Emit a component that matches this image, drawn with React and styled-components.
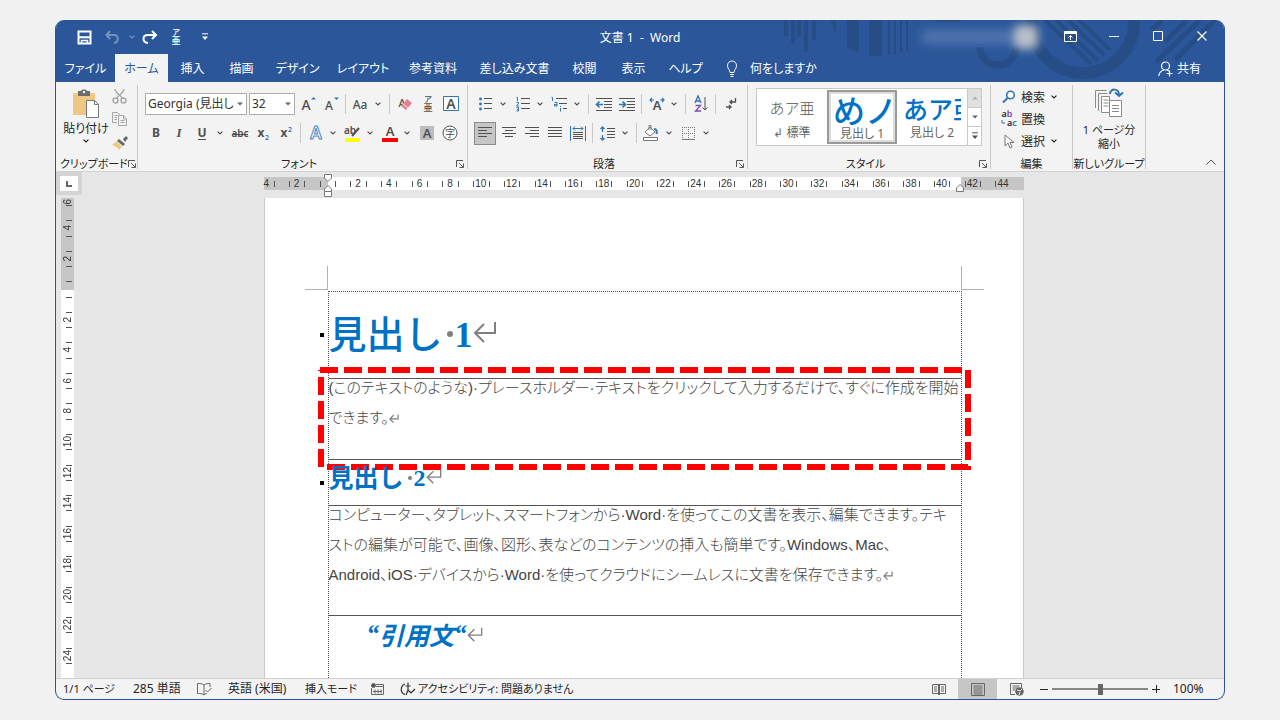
import React from "react";
import styled, { createGlobalStyle, css } from "styled-components";

const ui = `"Noto Sans", "Noto Sans CJK JP", sans-serif`;
const blue = "#2b579a";
const accent = "#0072c6";
const line = "#c8c8c8";

const GlobalStyle = createGlobalStyle`
  * { box-sizing: border-box; }
  body { margin: 0; background: #f1f1f1; }
  button, select, input { font: inherit; color: inherit; }
  button { border: 0; background: none; padding: 0; margin: 0; }
  h1, h2, p, blockquote { margin: 0; }
  svg { flex: none; overflow: visible; }
`;

const Desktop = styled.div`
  min-height: 100vh;
  padding: 20px 55px;
  display: flex;
  font-family: ${ui};
  font-feature-settings: "palt";
  font-size: 12px;
  line-height: 16px;
  color: #262626;
`;

const Window = styled.main`
  flex: 1;
  min-width: 0;
  height: calc(100vh - 40px);
  display: flex;
  flex-direction: column;
  border: 1px solid ${blue};
  border-top: 0;
  border-radius: 9px;
  overflow: hidden;
  background: #f3f3f3;
`;

/* ---------- header ---------- */
const Header = styled.header`
  position: relative;
  background: ${blue};
  color: #fff;
  flex: none;
`;
const Pattern = styled.svg`
  position: absolute;
  top: 0;
  right: 0;
  overflow: hidden;
`;
const TitleBar = styled.div`
  position: relative;
  height: 34px;
  display: grid;
  grid-template-columns: 1fr auto 1fr;
  align-items: center;
`;
const QuickAccess = styled.div`
  display: flex;
  align-items: center;
  padding-left: 16px;
`;
const QuickButton = styled.button`
  width: ${(p) => p.$w || 24}px;
  height: 24px;
  display: flex;
  align-items: center;
  justify-content: center;
  opacity: ${(p) => (p.disabled ? 0.35 : 1)};
`;
const DocTitle = styled.div`
  white-space: pre;
  padding-top: 2px;
`;
const WindowArea = styled.div`
  display: flex;
  justify-content: flex-end;
  align-items: center;
`;
const Account = styled.div`
  display: flex;
  align-items: center;
  margin-right: 10px;
  filter: blur(5px);
`;
const AccountName = styled.span`
  width: 92px;
  height: 14px;
  background: #4f74ae;
`;
const Avatar = styled.span`
  width: 24px;
  height: 24px;
  border-radius: 6px;
  background: #b9bfc8;
`;
const WindowButton = styled.button`
  width: 44px;
  height: 32px;
  display: flex;
  align-items: center;
  justify-content: center;
  padding-bottom: 2px;
`;
const TabRow = styled.nav`
  position: relative;
  height: 28px;
  display: flex;
  align-items: stretch;
`;
const Tab = styled.button`
  width: ${(p) => p.$w}px;
  padding-top: 2px;
  white-space: nowrap;
  ${(p) => p.$active && css`
    background: #f3f3f3;
    color: ${blue};
  `}
`;
const TellMe = styled.button`
  display: flex;
  align-items: center;
  gap: 12px;
  padding: 2px 0 0 13px;
`;
const Share = styled.button`
  display: flex;
  align-items: center;
  gap: 4px;
  margin-left: auto;
  padding: 2px 23px 0 0;
`;

/* ---------- ribbon ---------- */
const Ribbon = styled.section`
  height: 90px;
  flex: none;
  display: flex;
  padding-top: 3px;
  border-bottom: 1px solid #d2d2d2;
  color: #505050;
`;
const Group = styled.div`
  width: ${(p) => p.$w}px;
  flex: none;
  height: 84px;
  display: flex;
  flex-direction: column;
  border-right: 1px solid ${line};
`;
const GroupBody = styled.div`
  height: 68px;
  flex: none;
  padding: ${(p) => p.$pad || "0"};
  display: flex;
  flex-direction: ${(p) => (p.$column ? "column" : "row")};
`;
const GroupFooter = styled.div`
  height: 16px;
  flex: none;
  display: flex;
  align-items: center;
  padding: ${(p) => (p.$launcher ? "6px 3px 0 4px" : "6px 0 0")};
  font-size: 11px;
  color: #262626;
  white-space: nowrap;
`;
const GroupName = styled.span`
  flex: 1;
  text-align: center;
`;
const RibbonRow = styled.div`
  display: flex;
  align-items: center;
  height: 24px;
  margin-top: ${(p) => p.$top || 0}px;
`;
const Tool = styled.button`
  width: 23px;
  height: 23px;
  flex: none;
  display: flex;
  align-items: center;
  justify-content: center;
  ${(p) => p.$active && css`
    background: #c6c6c6;
    border: 1px solid #8a8a8a;
    width: 22px;
    margin-right: 1px;
  `}
`;
const DropArrow = styled.button`
  width: 14px;
  height: 22px;
  flex: none;
  display: flex;
  align-items: center;
  padding-left: 3px;
`;
const Divider = styled.span`
  width: 7px;
  height: 20px;
  flex: none;
  background: linear-gradient(${line}, ${line}) center / 1px 100% no-repeat;
`;
const Combo = styled.div`
  position: relative;
  width: ${(p) => p.$w}px;
  height: 22px;
  flex: none;
  margin-right: ${(p) => p.$gap}px;
  select {
    appearance: none;
    width: 100%;
    height: 100%;
    border: 1px solid #ababab;
    border-radius: 0;
    background: #fff;
    color: #333;
    padding: 0 12px 0 2px;
    font-size: 12px;
  }
  svg {
    position: absolute;
    right: 4px;
    top: 9px;
    pointer-events: none;
  }
`;
const PasteButton = styled.button`
  width: 52px;
  height: 64px;
  margin-left: 4px;
  padding-top: 4px;
  display: flex;
  flex-direction: column;
  align-items: center;
  gap: 2px;
  color: #262626;
  white-space: nowrap;
`;
const ClipColumn = styled.div`
  display: flex;
  flex-direction: column;
  margin-left: -4px;
`;
const Gallery = styled.div`
  display: flex;
  height: 58px;
  border: 1px solid ${line};
  background: #fff;
  flex: 1;
`;
const StyleItem = styled.button`
  width: 70px;
  padding: 2px 6px;
  display: flex;
  flex-direction: column;
  white-space: nowrap;
  ${(p) => p.$active && css`
    border: 2px solid #9a9a9a;
    box-shadow: inset 0 0 0 2px #dcdcdc;
    margin: 1px 0;
    padding: 0 4px;
  `}
`;
const Preview = styled.span`
  display: block;
  height: 34px;
  flex: none;
  width: 100%;
  overflow: hidden;
  font-feature-settings: normal;
  font-family: "Noto Sans CJK JP", sans-serif;
  font-size: ${(p) => p.$size}px;
  line-height: 34px;
  color: ${(p) => (p.$size > 16 ? accent : "#555")};
  text-align: ${(p) => (p.$size > 16 ? "left" : "center")};
  font-weight: ${(p) => (p.$size > 16 ? 500 : 300)};
`;
const StyleName = styled.span`
  width: 100%;
  text-align: center;
  color: #666;
`;
const Scroller = styled.div`
  width: 14px;
  display: flex;
  flex-direction: column;
`;
const ScrollButton = styled.button`
  flex: 1;
  display: flex;
  align-items: center;
  justify-content: center;
  border-left: 1px solid ${line};
  border-bottom: 1px solid ${line};
  background: ${(p) => (p.disabled ? "#e0e0e0" : "#fff")};
  svg { opacity: ${(p) => (p.disabled ? 0.4 : 1)}; }
  &:last-child { border-bottom: 0; }
`;
const EditButton = styled.button`
  height: 22px;
  display: flex;
  align-items: center;
  gap: 4px;
  color: #262626;
  white-space: nowrap;
`;
const EditIcon = styled.span`
  width: 16px;
  display: flex;
  justify-content: center;
`;
const EditLabel = styled.span`
  padding-top: 2px;
  margin-right: 2px;
`;
const NewGroupButton = styled.button`
  flex: 1;
  display: flex;
  flex-direction: column;
  align-items: center;
  line-height: 14px;
  font-size: 11px;
  color: #262626;
  padding-top: 3px;
`;
const NewGroupIcon = styled.span`
  height: 35px;
`;
const Collapse = styled.button`
  margin: auto 8px 2px auto;
`;

/* ---------- workspace ---------- */
const Workspace = styled.section`
  flex: 1;
  min-height: 0;
  display: flex;
  background: #e6e6e6;
  overflow: hidden;
`;
const RulerColumn = styled.div`
  width: 26px;
  flex: none;
  display: flex;
  flex-direction: column;
`;
const TabSelector = styled.button`
  height: 23px;
  flex: none;
  margin-bottom: 3px;
  border: 4px solid #d4d4d4;
  background: #fff;
  color: #666;
  display: flex;
  align-items: center;
  justify-content: center;
`;
const VRuler = styled.div`
  flex: 1;
  min-height: 0;
  width: 13px;
  margin-left: 5px;
  display: flex;
  flex-direction: column;
  overflow: hidden;
  background: linear-gradient(#c6c6c6 92px, #fff 92px);
`;
const VCell = styled.span`
  flex: ${(p) => (p.$size ? `none; height: ${p.$size}px` : 1)};
  min-height: 0;
  display: flex;
  align-items: ${(p) => (p.$size ? "flex-end" : "center")};
  justify-content: center;
  font: 10px/10px "Liberation Sans", sans-serif;
  color: #333;
  background: linear-gradient(#555, #555) right 2px top / 6px ${(p) => (p.$size ? 0 : 1)}px no-repeat;
  span { writing-mode: vertical-rl; transform: rotate(180deg); }
`;
const Canvas = styled.div`
  flex: 1;
  min-width: 0;
  padding-right: 19px;
  display: flex;
  flex-direction: column;
  align-items: center;
  overflow: hidden;
`;
const HRuler = styled.div`
  position: relative;
  width: 760px;
  height: 13px;
  flex: none;
  margin: 5px 0 8px;
  padding-right: 13px;
  display: flex;
  background: linear-gradient(90deg, #c6c6c6 64px, #fff 64px, #fff 697px, #c6c6c6 697px);
`;
const HCell = styled.span`
  flex: ${(p) => (p.$size ? `none; width: ${p.$size}px` : 1)};
  min-width: 0;
  display: flex;
  align-items: center;
  justify-content: ${(p) => (p.$size ? "flex-start" : "center")};
  font: 10px/12px "Liberation Sans", sans-serif;
  color: #333;
  background: linear-gradient(#555, #555) left center / ${(p) => (p.$size ? 0 : 1)}px 6px no-repeat;
`;
const Marker = styled.svg`
  position: absolute;
  top: ${(p) => p.$y}px;
  left: ${(p) => p.$x}px;
`;
const Paper = styled.article`
  width: 760px;
  flex: 1;
  min-height: 0;
  background: #fff;
  border: solid #c9c9c9;
  border-width: 0 1px;
  padding-top: 68px;
  overflow: hidden;
  display: flex;
  flex-direction: column;
`;
const CropRow = styled.div`
  display: flex;
  justify-content: space-between;
  padding: 0 39px 0 40px;
  flex: none;
  margin-bottom: 1px;
`;
const Crop = styled.span`
  width: 23px;
  height: 24px;
  border: 0 solid #b0b0b0;
  border-bottom-width: 1px;
  ${(p) => (p.$right ? "border-left-width: 1px;" : "border-right-width: 1px;")}
`;
const Frame = styled.div`
  flex: 1;
  margin: 0 61px 0 63px;
  border: 1px dotted #555;
  border-bottom: 0;
`;
const Cell = styled.section`
  position: relative;
  display: flow-root;
  height: ${(p) => p.$h}px;
  border-bottom: ${(p) => (p.$last ? 0 : 1)}px solid #555;
  white-space: nowrap;
`;
const Bullet = styled.span`
  position: absolute;
  left: -9px;
  top: ${(p) => p.$y}px;
  width: 4px;
  height: 4px;
  background: #000;
`;
const headingText = css`
  display: flex;
  align-items: center;
  color: ${accent};
  font-family: "Noto Sans CJK JP", sans-serif;
  font-feature-settings: normal;
`;
const HeadingOne = styled.h1`
  ${headingText}
  font-size: 38px;
  font-weight: 500;
  line-height: 74px;
`;
const HeadingTwo = styled.h2`
  ${headingText}
  font-size: 25px;
  font-weight: 700;
  line-height: 28px;
`;
const Numeral = styled.span`
  font-family: "Liberation Serif", serif;
  font-weight: 700;
  font-size: ${(p) => p.$size}px;
  padding-top: ${(p) => p.$drop}px;
`;
const SpaceDot = styled.span`
  width: ${(p) => p.$r}px;
  height: ${(p) => p.$r}px;
  margin: 4px 2px 0 4px;
  border-radius: 50%;
  background: #808080;
`;
const BodyText = styled.p`
  font-family: "Liberation Sans", "Noto Sans CJK JP", sans-serif;
  font-weight: 300;
  font-size: 15px;
  line-height: 30px;
  color: #444;
  margin-top: -6px;
`;
const TextLine = styled.span`
  display: block;
`;
const Quote = styled.blockquote`
  ${headingText}
  padding-left: 38px;
  font-size: 25px;
  font-weight: 700;
  font-style: italic;
  line-height: 36px;
`;
const QuoteMark = styled.span`
  font-family: "Liberation Serif", serif;
`;
const Highlight = styled.svg`
  position: absolute;
  left: -11px;
  top: -12px;
  pointer-events: none;
`;

/* ---------- status bar ---------- */
const StatusBar = styled.footer`
  height: 21px;
  flex: none;
  display: flex;
  align-items: center;
  border-top: 1px solid #d0d0d0;
  white-space: nowrap;
`;
const StatusItem = styled.button`
  width: ${(p) => p.$w}px;
  height: 20px;
  flex: none;
  display: flex;
  align-items: center;
  gap: 2px;
  padding-left: 7px;
  font-size: ${(p) => (p.$small ? 11 : 12)}px;
`;
const ViewButton = styled.button`
  width: 39px;
  height: 20px;
  display: flex;
  align-items: center;
  justify-content: center;
  color: #666;
  background: ${(p) => (p.$active ? "#c6c6c6" : "none")};
`;
const Spacer = styled.span`
  flex: 1;
`;
const ZoomStep = styled.button`
  width: 16px;
  display: flex;
  justify-content: center;
`;
const ZoomSlider = styled.input`
  appearance: none;
  width: 96px;
  height: 14px;
  margin: 0;
  background: linear-gradient(#888, #888) center / 100% 2px no-repeat;
  &::-webkit-slider-thumb {
    appearance: none;
    width: 5px;
    height: 11px;
    background: #666;
  }
`;
const ZoomValue = styled.button`
  width: 60px;
  text-align: left;
  padding-left: 9px;
`;

/* ---------- icons ---------- */
const Svg = ({ w = 16, h = 16, children, ...rest }) => (
  <svg width={w} height={h} viewBox={`0 0 ${w} ${h}`} fill="none" stroke="currentColor" aria-hidden="true" {...rest}>
    {children}
  </svg>
);
const Chevron = () => (
  <Svg w={6} h={4} strokeWidth="1.2"><path d="M.6.6 3 3 5.4.6" /></Svg>
);
const Triangle = ({ up }) => (
  <Svg w={6} h={4} stroke="none" fill="#666"><path d={up ? "M0 3.5h6L3 .5z" : "M0 .5h6L3 3.5z"} /></Svg>
);
const Launcher = () => (
  <Svg w={8} h={8} stroke="#555"><path d="M.5 7V.5H7M3 3l4 4M7.5 3.5v4h-4" /></Svg>
);
const ReturnMark = ({ w, h }) => (
  <svg width={w} height={h} viewBox="0 0 24 22" fill="none" stroke="#7f7f7f" strokeWidth={w > 12 ? 2 : 3} aria-hidden="true">
    <path d="M22 1v11H2M11 3 2 12l9 9" />
  </svg>
);
const Glyph = ({ x, y, size, fill = "currentColor", family = "Noto Sans", weight = 600, children, ...r }) => (
  <text x={x} y={y} fontSize={size} fill={fill} stroke="none" fontFamily={`${family}, 'Noto Sans CJK JP'`} fontWeight={weight} textAnchor="middle" {...r}>{children}</text>
);
const Ruby = () => (
  <Svg w={12} h={18}><Glyph x={6} y={7} size={8} weight={500}>ア</Glyph><Glyph x={6} y={16} size={9} weight={500}>亜</Glyph></Svg>
);
const rows = (list) => list.map(([x1, x2, y], i) => <path key={i} d={`M${x1} ${y}.5H${x2}`} />);

const icons = {
  save: <Svg w={15} h={15} strokeWidth="2"><path d="M1.5 1.5h12v12h-12z" /><path d="M1 7.2h13" /><path d="M4.5 14v-3.500h6V14" strokeWidth="1.5" /></Svg>,
  undo: <Svg w={15} h={14} strokeWidth="2"><path d="M5 1 1.5 5 5 9M2 5h7c5 0 5 7 0 8" /></Svg>,
  redo: <Svg w={15} h={14} strokeWidth="2"><path d="m10 1 4 4-4 4M13 5H6C0 5 0 12 6 13" /></Svg>,
  more: <Svg w={6} h={8}><path d="M0 .8h6" /><path d="M0 3.5h6L3 7z" fill="currentColor" stroke="none" /></Svg>,
  bulb: <Svg w={12} h={18}><path d="M4 12.500c0-2.500-2.500-3.500-2.500-7a4.500 4.500 0 0 1 9 0c0 3.500-2.500 4.500-2.500 7zM4 14.500h4M4.500 16.500h3" /></Svg>,
  share: <Svg w={15} h={16} strokeWidth="1.2"><circle cx="7.500" cy="5" r="4" /><path d="M.8 15c.3-3 2-5 5-6M9 9l2 1M11.500 9.500v6M8.500 12.500h6" /></Svg>,
  ribbonOpts: <Svg w={13} h={11}><path d="M.5.5h12v10H.5z" /><path d="M1 2h11" strokeWidth="2" /><path d="M6.500 9V5M4.500 6.500l2-2 2 2" /></Svg>,
  min: <Svg w={10} h={10}><path d="M0 5.500h10" /></Svg>,
  max: <Svg w={10} h={10}><path d="M.5.5h9v9h-9z" /></Svg>,
  close: <Svg w={10} h={10} strokeWidth="1.2"><path d="m.5.5 9 9M9.500.5l-9 9" /></Svg>,
  paste: <Svg w={28} h={30}><path d="M1 4h22v22H1z" fill="#ecc883" stroke="none" /><path d="M6 2h3c0-2 6-2 6 0h3v5H6z" fill="#6d6d6d" stroke="none" /><circle cx="12" cy="3" r="1.200" fill="#fff" stroke="none" /><path d="M14.500 11.500h8l4 4v13h-12z" fill="#fff" stroke="#777" /><path d="M22.500 11.500v4h4" stroke="#777" /></Svg>,
  cut: <Svg w={15} h={15} stroke="#a6a6a6" strokeWidth="1.400"><path d="M3 0c0 4 6 6 7 9M12 0c0 4-6 6-7 9" /><circle cx="3.500" cy="11.500" r="2.500" /><circle cx="11.500" cy="11.500" r="2.500" /></Svg>,
  copy: <Svg w={15} h={15} stroke="#a6a6a6"><path d="M5 10.500H.5v-10h5l2 2V4M2.500 3.500h3M2.500 5.500H5M2.500 7.500H5" /><path d="M6.500 3.500h5l3 3v7h-8zM11.500 4v3h3M8.500 8.500h4M8.500 10.500h4" /></Svg>,
  brush: <Svg w={16} h={14} stroke="none"><path d="M11 3 14 0l2 2-3 4z" fill="#666" /><path d="m7 3 6 5-2 2-6-5z" fill="#666" /><path d="m4.500 5.500 5.500 5L7 14C5 11 3 10 0 9z" fill="#ecc883" /></Svg>,
  grow: <Svg w={16} h={16}><Glyph x={6} y={14} size={14} weight={500}>A</Glyph><path d="M11 3.500h5L13.500 1z" fill="#2f75b5" stroke="none" /></Svg>,
  shrink: <Svg w={16} h={16}><Glyph x={6} y={14} size={12} weight={500}>A</Glyph><path d="M11 1.500h5L13.500 4z" fill="#2f75b5" stroke="none" /></Svg>,
  caseIcon: <Svg w={18} h={16}><Glyph x={8} y={13} size={12} weight={500}>Aa</Glyph></Svg>,
  clear: <Svg w={16} h={16}><Glyph x={5} y={11} size={11} weight={500}>A</Glyph><path d="m10 3 5 4-6 7-5-4z" fill="#e57f92" stroke="none" /><path d="m6 8 5 4" stroke="#f3f3f3" /></Svg>,
  boxA: <Svg w={16} h={16}><path d="M.5.5h15v14H.5z" stroke="#2f75b5" fill="#fff" /><Glyph x={8} y={13} size={14}>A</Glyph></Svg>,
  bold: <Svg><Glyph x={7} y={12} size={12} weight={700}>B</Glyph></Svg>,
  italic: <Svg><Glyph x={7} y={12} size={13} family="Liberation Serif" weight={700} fontStyle="italic">I</Glyph></Svg>,
  under: <Svg><Glyph x={7} y={12} size={12} weight={700}>U</Glyph><path d="M3 14.500h8" /></Svg>,
  strike: <Svg w={18}><Glyph x={9} y={12} size={10}>abc</Glyph><path d="M1 9.500h16" /></Svg>,
  sub: <Svg><Glyph x={6} y={12} size={12} weight={700}>x</Glyph><Glyph x={12} y={15} size={7} fill="#2f75b5">2</Glyph></Svg>,
  sup: <Svg><Glyph x={6} y={12} size={12} weight={700}>x</Glyph><Glyph x={12} y={7} size={7} fill="#2f75b5">2</Glyph></Svg>,
  effect: <Svg><text x="8" y="14" fontSize="17" fontFamily="Noto Sans" fontWeight="600" fill="#fff" stroke="#4a86c5" textAnchor="middle">A</text></Svg>,
  hilite: <Svg w={17} h={17}><Glyph x={6} y={9} size={10}>ab</Glyph><path d="M15 3 8 11" strokeWidth="2" /><path d="M1 13h15v4H1z" fill="#ff0" stroke="none" /></Svg>,
  colorA: <Svg w={16} h={17}><Glyph x={8} y={11} size={13}>A</Glyph><path d="M0 13h16v4H0z" fill="#f00" stroke="none" /></Svg>,
  shadeA: <Svg w={14} h={14}><path d="M0 0h14v14H0z" fill="#bdbdbd" stroke="none" /><Glyph x={7} y={12} size={13}>A</Glyph></Svg>,
  circleChar: <Svg><circle cx="8" cy="8" r="7" fill="#fff" /><Glyph x={8} y={11.5} size={10} weight={400}>字</Glyph></Svg>,
  bullets: <Svg w={14} h={14}>{rows([[5, 13, 1], [5, 13, 6], [5, 13, 11]])}<g fill="#2f75b5" stroke="none"><circle cx="1.500" cy="2" r="1.400" /><circle cx="1.500" cy="7" r="1.400" /><circle cx="1.500" cy="12" r="1.400" /></g></Svg>,
  numbers: <Svg w={14} h={16}>{rows([[5, 14, 2], [5, 14, 7], [5, 14, 12]])}<g stroke="#2f75b5"><path d="M.5 1.500h1V5M.5 6.500h2v1.500l-2 1.500v.5h2.500M.5 11.500h2v3.500h-2M1 13.500h1.500" /></g></Svg>,
  multi: <Svg w={17} h={16}>{rows([[5, 16, 2], [8, 16, 7], [12, 16, 12]])}<g stroke="#2f75b5"><path d="M.5 1.500h1V5M3.500 6.500h2.500V10H3.500V8.500H6M9.500 12v3.500M9.500 10v1" /></g></Svg>,
  outdent: <Svg w={16} h={13}>{rows([[0, 16, 0], [8, 16, 3], [8, 16, 6], [8, 16, 9], [0, 16, 12]])}<path d="M7 6.500H1M3.500 3.500l-3 3 3 3" stroke="#2f75b5" strokeWidth="1.600" /></Svg>,
  indent: <Svg w={16} h={13}>{rows([[0, 16, 0], [8, 16, 3], [8, 16, 6], [8, 16, 9], [0, 16, 12]])}<path d="M0 6.500h6M3.500 3.500l3 3-3 3" stroke="#2f75b5" strokeWidth="1.600" /></Svg>,
  spread: <Svg w={16} h={14}><Glyph x={8} y={13} size={13}>A</Glyph><path d="M5 3H1M3 1 1 3l2 2M11 3h4M13 1l2 2-2 2" stroke="#2f75b5" strokeWidth="1.200" /></Svg>,
  sort: <Svg w={14} h={16}><path d="m1 7 3-7 3 7M2 5h4" stroke="#2f75b5" strokeWidth="1.300" /><path d="M1.500 9.500h5L1.500 15h5.500" stroke="#8648ad" strokeWidth="1.300" /><path d="M11 1v13M8.500 11.500 11 14l2.500-2.500" /></Svg>,
  marks: <Svg w={12} h={14}><path d="M10.500 1v4H5M7 3 5 5l2 2M1 10h5M4 8l2 2-2 2" strokeWidth="1.300" /></Svg>,
  left: <Svg w={14} h={12}>{rows([[0, 14, 0], [0, 9, 3], [0, 14, 6], [0, 9, 9]])}</Svg>,
  center: <Svg w={14} h={12}>{rows([[0, 14, 0], [3, 11, 3], [0, 14, 6], [3, 11, 9]])}</Svg>,
  right: <Svg w={14} h={12}>{rows([[0, 14, 0], [5, 14, 3], [0, 14, 6], [5, 14, 9]])}</Svg>,
  justify: <Svg w={14} h={12}>{rows([[0, 14, 0], [0, 14, 3], [0, 14, 6], [0, 14, 9]])}</Svg>,
  distribute: <Svg w={16} h={15}><path d="M.5 0v15M15.500 0v15M3 2.500h10M5 .5l-2 2 2 2M11 .5l2 2-2 2" stroke="#2f75b5" />{rows([[3, 13, 6], [3, 13, 8], [3, 13, 10], [3, 13, 12]])}</Svg>,
  spacing: <Svg w={15} h={15}>{rows([[7, 15, 2], [7, 15, 5], [7, 15, 8], [7, 15, 11]])}<path d="M2.500 1v5M.5 3l2-2 2 2M2.500 9v5M.5 12l2 2 2-2" stroke="#2f75b5" strokeWidth="1.300" /></Svg>,
  bucket: <Svg w={17} h={16} stroke="#777"><path d="m7 2 5 5-5 4-5-4zM6 5V.5h2V5" fill="#fff" /><path d="M11 4c3 0 3 3 2.500 5" stroke="#2f75b5" strokeWidth="2" /><path d="M.5 12.500h14v3H.5z" fill="#fff" /></Svg>,
  borders: <Svg w={13} h={13} stroke="#777"><path d="M.5 0v12M6.500 0v12M12.500 0v12M0 .5h13M0 6.500h13" strokeDasharray="1 1" /><path d="M0 12.500h13" /></Svg>,
  find: <Svg w={14} h={14} stroke="#2f75b5" strokeWidth="1.600"><circle cx="8.500" cy="5" r="3.800" fill="#fff" /><path d="M5.500 8 1 12.500" strokeWidth="2" /></Svg>,
  replace: <Svg w={16} h={16}><Glyph x={6} y={6} size={9}>a<tspan fill="#8648ad">b</tspan></Glyph><Glyph x={11} y={15} size={9}>a<tspan fill="#2f75b5">c</tspan></Glyph><path d="M1 9v3h3" stroke="#2f75b5" /></Svg>,
  select: <Svg w={12} h={15} stroke="#777"><path d="M2 1v11l3-3 2 5 2-1-2-4.500h4z" fill="#fff" /></Svg>,
  onePage: <Svg w={30} h={30} stroke="#8a8a8a"><path d="M1.500 20V2.500h11M4.500 23V5.500h9" /><path d="M7.500 8.500h8v16h-8zM9.500 12h5M9.500 15h5M9.500 18h5" fill="#fff" /><path d="M15.500 12.500h12v16h-12z" fill="#fff" /><path d="M18 17.500h7M18 20.500h7M18 23.500h7" /><path d="M16 6c0-6 9-6 9 1M21 4.500l4 3.500 4-3.500" stroke="#2f75b5" strokeWidth="2" /></Svg>,
  collapse: <Svg w={10} h={6}><path d="m.5 5.500 4.500-4.500 4.500 4.500" /></Svg>,
  book: <Svg w={15} h={13} stroke="#666"><path d="M7 2C5 .5 3 .5.5.5v10c2.500 0 4.500 0 6.500 1.500zM7 2c1.500-1.500 4-1.500 6-1.500V4M7 12c1-1 2-1.300 3-1.500M8.500 7l2 2 4-4" /></Svg>,
  macro: <Svg w={13} h={12} stroke="#666"><path d="M5 1.500h7.500v10H.5V5" /><path d="M5 3.500h7.500M4 6.500v4M7 6.500v4M10 6.500v4M2 8.500h9" /><circle cx="2.500" cy="2.500" r="2" fill="#555" /></Svg>,
  access: <Svg w={16} h={15} stroke="#333" strokeWidth="1.200"><path d="M5 2C0 4 0 11 5 12.500M8 .5v8M5.500 4h5M8 8l-2 5M8 8l3 3 4-4" /></Svg>,
  read: <Svg w={14} h={12}><path d="M6.500 1.500h-6v9h6zM7.500 1.500h6v9h-6zM2 4h3M2 6h3M2 8h3M9 4h3M9 6h3M9 8h3" /><path d="M7 1v11" strokeWidth="2" /></Svg>,
  print: <Svg w={14} h={13}><path d="M.5.5h13v12H.5zM2.500 3h9M2.500 5h9M2.500 7h9M2.500 9h9M2.500 11h9" /></Svg>,
  web: <Svg w={14} h={13}><path d="M5 11.500H.5V.5h11V5M2.500 3h7M2.500 5h6M2.500 7h3" /><circle cx="9.500" cy="8.500" r="3.800" fill="#666" /><path d="m7 7 3 1 2-2M9 12l1-3" stroke="#f3f3f3" /></Svg>,
};

const Drop = ({ name }) => (
  <DropArrow aria-label={`${name} オプション`}><Chevron /></DropArrow>
);
const IconTool = ({ name, icon, drop, active }) => (
  <>
    <Tool aria-label={name} $active={active}>{icons[icon] || <Ruby />}</Tool>
    {drop && <Drop name={name} />}
  </>
);
const EditTool = ({ icon, label, drop }) => (
  <EditButton><EditIcon>{icons[icon]}</EditIcon><EditLabel>{label}</EditLabel>{drop && <Chevron />}</EditButton>
);
const RibbonGroup = ({ name, w, launcher, pad, column, children }) => (
  <Group $w={w}>
    <GroupBody $pad={pad} $column={column}>{children}</GroupBody>
    <GroupFooter $launcher={launcher}>
      <GroupName>{name}</GroupName>
      {launcher && <button aria-label={`${name} の詳細`}><Launcher /></button>}
    </GroupFooter>
  </Group>
);

const tabs = [
  ["ファイル", 59], ["ホーム", 53], ["挿入", 49], ["描画", 49], ["デザイン", 63], ["レイアウト", 68],
  ["参考資料", 72], ["差し込み文書", 91], ["校閲", 49], ["表示", 49], ["ヘルプ", 55],
];

const HeaderPattern = () => (
  <Pattern width="460" height="62" viewBox="765 20 460 62" fill="none" stroke="#264d86" aria-hidden="true">
    <g fill="#264d86" stroke="none">
      <path d="M785 20h4v16h-4zM792 20h4v23h-4zM798 20h4v17h-4zM805 20h4v32h-4zM813 20h4v20h-4z" />
      <path d="M831 20h6v13zM848 20h12v33l-12-6zM870 20h13v36h-13z" />
      <path d="M889 20h2v35h-2zM895 20h2v34h-2zM901 20h2v32h-2zM907 20h2v30h-2zM936 20h26v2h-26z" />
    </g>
    <path d="M981 47a18 18 0 0 0 36 0" strokeWidth="7" />
    <circle cx="1084" cy="22" r="51" strokeWidth="12" />
    <path d="m1046 20 46 44M1057 20l42 41M1069 20l36 35M1080 20l31 30" strokeWidth="4" />
    <path d="m1153 30 10-10M1166 42l22-22M1157 62l44-42M1176 60l40-40" strokeWidth="5" />
  </Pattern>
);

const range = (n) => Array.from({ length: n }, (_, i) => i);

export default function App() {
  return (
    <>
      <GlobalStyle />
      <Desktop>
        <Window>
          <Header>
            <HeaderPattern />
            <TitleBar>
              <QuickAccess>
                <QuickButton aria-label="上書き保存">{icons.save}</QuickButton>
                <QuickButton aria-label="元に戻す" disabled $w={32}>{icons.undo}</QuickButton>
                <QuickButton aria-label="元に戻すの一覧" disabled $w={8}><Chevron /></QuickButton>
                <QuickButton aria-label="やり直し" $w={26}>{icons.redo}</QuickButton>
                <QuickButton aria-label="ルビ" $w={28}><Ruby /></QuickButton>
                <QuickButton aria-label="クイック アクセスのカスタマイズ" $w={30}>{icons.more}</QuickButton>
              </QuickAccess>
              <DocTitle>文書 1  -  Word</DocTitle>
              <WindowArea>
                <Account><AccountName /><Avatar /></Account>
                <WindowButton aria-label="リボンの表示オプション">{icons.ribbonOpts}</WindowButton>
                <WindowButton aria-label="最小化">{icons.min}</WindowButton>
                <WindowButton aria-label="最大化">{icons.max}</WindowButton>
                <WindowButton aria-label="閉じる">{icons.close}</WindowButton>
              </WindowArea>
            </TitleBar>
            <TabRow>
              {tabs.map(([t, w]) => <Tab key={t} $w={w} $active={t === "ホーム"}>{t}</Tab>)}
              <TellMe>{icons.bulb}何をしますか</TellMe>
              <Share>{icons.share}共有</Share>
            </TabRow>
          </Header>

          <Ribbon>
            <RibbonGroup name="クリップボード" w={82} launcher>
              <PasteButton>{icons.paste}<span>貼り付け</span><Chevron /></PasteButton>
              <ClipColumn>
                <Tool aria-label="切り取り">{icons.cut}</Tool>
                <Tool aria-label="コピー">{icons.copy}</Tool>
                <Tool aria-label="書式のコピー">{icons.brush}</Tool>
              </ClipColumn>
            </RibbonGroup>

            <RibbonGroup name="フォント" w={330} launcher pad="7px 0 0 7px" column>
              <RibbonRow>
                <Combo $w={102} $gap={2}>
                  <select aria-label="フォント"><option>Georgia (見出しのフォント)</option></select>
                  <Triangle />
                </Combo>
                <Combo $w={46} $gap={1}>
                  <select aria-label="フォント サイズ"><option>32</option></select>
                  <Triangle />
                </Combo>
                <IconTool name="フォント サイズの拡大" icon="grow" />
                <IconTool name="フォント サイズの縮小" icon="shrink" />
                <Divider />
                <IconTool name="文字種の変換" icon="caseIcon" drop />
                <Divider />
                <IconTool name="書式のクリア" icon="clear" />
                <IconTool name="ルビ" />
                <IconTool name="囲み線" icon="boxA" />
              </RibbonRow>
              <RibbonRow $top={5}>
                <IconTool name="太字" icon="bold" />
                <IconTool name="斜体" icon="italic" />
                <IconTool name="下線" icon="under" drop />
                <IconTool name="取り消し線" icon="strike" />
                <IconTool name="下付き" icon="sub" />
                <IconTool name="上付き" icon="sup" />
                <Divider />
                <IconTool name="文字の効果" icon="effect" drop />
                <IconTool name="蛍光ペン" icon="hilite" drop />
                <IconTool name="フォントの色" icon="colorA" drop />
                <IconTool name="文字の網かけ" icon="shadeA" />
                <IconTool name="囲い文字" icon="circleChar" />
              </RibbonRow>
            </RibbonGroup>

            <RibbonGroup name="段落" w={280} launcher pad="7px 0 0 6px" column>
              <RibbonRow>
                <IconTool name="箇条書き" icon="bullets" drop />
                <IconTool name="段落番号" icon="numbers" drop />
                <IconTool name="アウトライン" icon="multi" drop />
                <Divider />
                <IconTool name="インデントを減らす" icon="outdent" />
                <IconTool name="インデントを増やす" icon="indent" />
                <Divider />
                <IconTool name="拡張書式" icon="spread" drop />
                <Divider />
                <IconTool name="並べ替え" icon="sort" />
                <Divider />
                <IconTool name="編集記号の表示" icon="marks" />
              </RibbonRow>
              <RibbonRow $top={5}>
                <IconTool name="左揃え" icon="left" active />
                <IconTool name="中央揃え" icon="center" />
                <IconTool name="右揃え" icon="right" />
                <IconTool name="両端揃え" icon="justify" />
                <IconTool name="均等割り付け" icon="distribute" />
                <Divider />
                <IconTool name="行間" icon="spacing" drop />
                <Divider />
                <IconTool name="塗りつぶし" icon="bucket" drop />
                <IconTool name="罫線" icon="borders" drop />
              </RibbonRow>
            </RibbonGroup>

            <RibbonGroup name="スタイル" w={243} launcher pad="3px 10px 0 8px">
              <Gallery>
                <StyleItem><Preview $size={15}>あア亜</Preview><StyleName>↲ 標準</StyleName></StyleItem>
                <StyleItem $active><Preview $size={32}>めノ</Preview><StyleName>見出し 1</StyleName></StyleItem>
                <StyleItem><Preview $size={25}>あア亜</Preview><StyleName>見出し 2</StyleName></StyleItem>
                <Scroller>
                  <ScrollButton aria-label="前の行" disabled><Triangle up /></ScrollButton>
                  <ScrollButton aria-label="次の行"><Triangle /></ScrollButton>
                  <ScrollButton aria-label="その他">{icons.more}</ScrollButton>
                </Scroller>
              </Gallery>
            </RibbonGroup>

            <RibbonGroup name="編集" w={82} pad="1px 0 0 10px" column>
              <EditTool icon="find" label="検索" drop />
              <EditTool icon="replace" label="置換" />
              <EditTool icon="select" label="選択" drop />
            </RibbonGroup>

            <RibbonGroup name="新しいグループ" w={73}>
              <NewGroupButton><NewGroupIcon>{icons.onePage}</NewGroupIcon><span>1 ページ分</span><span>縮小</span></NewGroupButton>
            </RibbonGroup>
            <Collapse aria-label="リボンを折りたたむ">{icons.collapse}</Collapse>
          </Ribbon>

          <Workspace>
            <RulerColumn>
              <TabSelector aria-label="タブの種類"><Svg w={6} h={6} strokeWidth="2"><path d="M1 0v5h5" /></Svg></TabSelector>
              <VRuler>
                <VCell $size={7}><span>6</span></VCell>
                {range(31).map((i) => {
                  const n = Math.abs(i - 5);
                  return <VCell key={i}>{n > 0 && n % 2 === 0 && <span>{n}</span>}</VCell>;
                })}
              </VRuler>
            </RulerColumn>
            <Canvas>
              <HRuler>
                <HCell $size={10}>4</HCell>
                {range(48).map((i) => {
                  const n = Math.abs(i - 3);
                  return <HCell key={i}>{n > 0 && n % 2 === 0 && n}</HCell>;
                })}
                <Marker $x={59} $y={-3} width="10" height="24" viewBox="0 0 10 24" fill="#fff" stroke="#777">
                  <path d="M1.500.5h7V4L5 7.500 1.500 4zM5 11.500 8.500 15v2.500h-7V15zM1.500 17.500h7v5h-7z" />
                </Marker>
                <Marker $x={691} $y={7} width="10" height="9" viewBox="0 0 10 9" fill="#fff" stroke="#777">
                  <path d="M5 .5 8.500 4v3.500h-7V4z" />
                </Marker>
              </HRuler>
              <Paper>
                <CropRow><Crop /><Crop $right /></CropRow>
                <Frame>
                  <Cell $h={87}>
                    <Bullet $y={41} />
                    <HeadingOne>見出し<SpaceDot $r={6} /><Numeral $size={36} $drop={6}>1</Numeral><ReturnMark w={24} h={22} /></HeadingOne>
                  </Cell>
                  <Cell $h={81}>
                    <BodyText>
                      <TextLine>(このテキストのような)·プレースホルダー·テキストをクリックして入力するだけで、すぐに作成を開始</TextLine>
                      <TextLine>できます。<ReturnMark w={10} h={9} /></TextLine>
                    </BodyText>
                    <Highlight width="654" height="104" viewBox="318 367 654 104" fill="none" stroke="#f00" strokeWidth="6" strokeDasharray="18 6" aria-hidden="true">
                      <path d="M320 370H968V467H321V370" />
                    </Highlight>
                  </Cell>
                  <Cell $h={46}>
                    <Bullet $y={21} />
                    <HeadingTwo>見出し<SpaceDot $r={4} /><Numeral $size={24} $drop={4}>2</Numeral><ReturnMark w={16} h={15} /></HeadingTwo>
                  </Cell>
                  <Cell $h={110}>
                    <BodyText>
                      <TextLine>コンピューター、タブレット、スマートフォンから·Word·を使ってこの文書を表示、編集できます。テキ</TextLine>
                      <TextLine>ストの編集が可能で、画像、図形、表などのコンテンツの挿入も簡単です。Windows、Mac、</TextLine>
                      <TextLine>Android、iOS·デバイスから·Word·を使ってクラウドにシームレスに文書を保存できます。<ReturnMark w={10} h={9} /></TextLine>
                    </BodyText>
                  </Cell>
                  <Cell $h={62} $last>
                    <Quote><QuoteMark>“</QuoteMark>引用文<QuoteMark>“</QuoteMark><ReturnMark w={16} h={15} /></Quote>
                  </Cell>
                </Frame>
              </Paper>
            </Canvas>
          </Workspace>

          <StatusBar>
            <StatusItem $w={70} $small>1/1 ページ</StatusItem>
            <StatusItem $w={64}>285 単語</StatusItem>
            <StatusItem $w={31} aria-label="文章校正">{icons.book}</StatusItem>
            <StatusItem $w={77}>英語 (米国)</StatusItem>
            <StatusItem $w={66} $small>挿入モード</StatusItem>
            <StatusItem $w={29} aria-label="マクロの記録">{icons.macro}</StatusItem>
            <StatusItem $w={190} $small>{icons.access}アクセシビリティ: 問題ありません</StatusItem>
            <Spacer />
            <ViewButton aria-label="閲覧モード">{icons.read}</ViewButton>
            <ViewButton aria-label="印刷レイアウト" $active>{icons.print}</ViewButton>
            <ViewButton aria-label="Web レイアウト">{icons.web}</ViewButton>
            <ZoomStep aria-label="縮小"><Svg w={8} h={8}><path d="M0 4.500h8" /></Svg></ZoomStep>
            <ZoomSlider type="range" min="0" max="100" defaultValue="50" aria-label="ズーム" />
            <ZoomStep aria-label="拡大"><Svg w={8} h={8}><path d="M0 4.500h8M4.500 0v8" /></Svg></ZoomStep>
            <ZoomValue>100%</ZoomValue>
          </StatusBar>
        </Window>
      </Desktop>
    </>
  );
}
